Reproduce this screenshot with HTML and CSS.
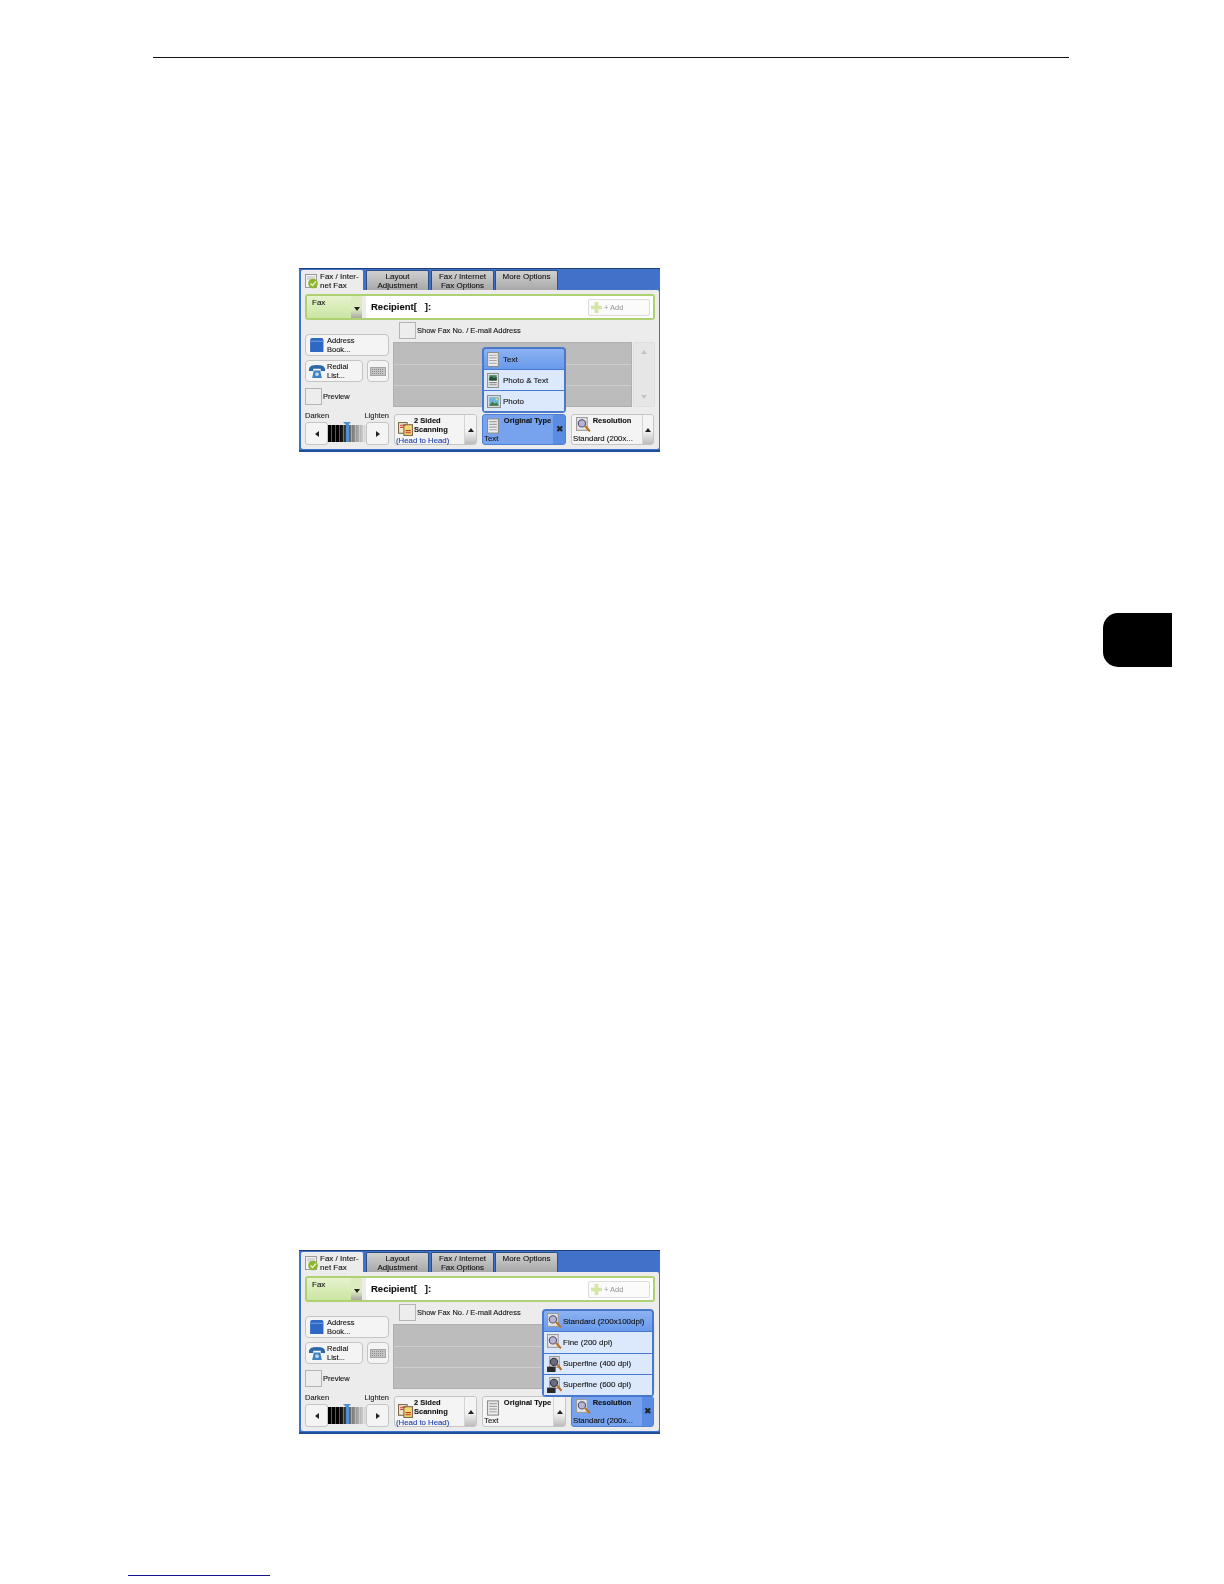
FILE: index.html
```html
<!DOCTYPE html>
<html lang="en">
<head>
  <meta charset="UTF-8">
  <meta name="viewport" content="width=device-width, initial-scale=1.0">
  <title>Fax Original Type and Resolution</title>
  <link rel="stylesheet" href="styles.css">
</head>
<body>
  <svg class="defs" width="0" height="0" aria-hidden="true">
    <symbol id="i-tab" viewBox="0 0 14 15">
      <rect x="0.5" y="0.5" width="11" height="13" fill="#f2f2f2" stroke="#9a9a9a"/>
      <path d="M2 3h8M2 5h8" stroke="#bbb"/>
      <circle cx="8" cy="9.5" r="4.8" fill="#8db52e"/>
      <path d="M5.5 9.5l2 2 3.5-4" fill="none" stroke="#e9f3c8" stroke-width="1.2"/>
    </symbol>
    <symbol id="i-doc" viewBox="0 0 11 14">
      <rect x="0.5" y="0.5" width="10" height="13" fill="#ececec" stroke="#8c8c8c"/>
      <path d="M2 3h7M2 5.5h7M2 8h7M2 10.5h7" stroke="#a2a2a2"/>
    </symbol>
    <symbol id="i-phototext" viewBox="0 0 11 14">
      <rect x="0.5" y="0.5" width="10" height="13" fill="#ececec" stroke="#8c8c8c"/>
      <rect x="2" y="2" width="7" height="5" fill="#3f8a5a"/>
      <path d="M2 5l2-2 2 2 3-1v3H2z" fill="#254a38"/>
      <path d="M2 9h7M2 11h7" stroke="#8c8c8c"/>
    </symbol>
    <symbol id="i-photo" viewBox="0 0 13 12">
      <rect x="0.5" y="0.5" width="12" height="11" fill="#e4e4e4" stroke="#8c8c8c"/>
      <rect x="2" y="2" width="9" height="8" fill="#6fb6d8"/>
      <path d="M2 10l3-4 2 2 2-1 2 3z" fill="#3c7d3c"/>
      <circle cx="9" cy="4" r="1" fill="#f0e060"/>
    </symbol>
    <symbol id="i-mag" viewBox="0 0 14 15">
      <rect x="0.5" y="0.5" width="10" height="12" fill="#e6e6e6" stroke="#9a9a9a"/>
      <circle cx="5.5" cy="6" r="3.4" fill="#b9b4d6" stroke="#4c4c6a"/>
      <path d="M8.5 8.5l4.5 5" stroke="#b8742a" stroke-width="2"/>
    </symbol>
    <symbol id="i-magdark" viewBox="0 0 14 15">
      <rect x="2.5" y="0.5" width="9" height="10" fill="#e0e0e0" stroke="#9a9a9a"/>
      <circle cx="6.5" cy="5.5" r="3.4" fill="#6a6a80" stroke="#35354a"/>
      <path d="M9.5 8l4 5" stroke="#b8742a" stroke-width="2"/>
      <rect x="0" y="10" width="8" height="5" fill="#2a2a2a"/>
    </symbol>
    <symbol id="i-book" viewBox="0 0 14 15">
      <path d="M1 3q0-2 2-2h9q1.500 0 1.500 2v11H1z" fill="#2f68c4"/>
      <path d="M1 4h12.500" stroke="#6f9ae0"/>
    </symbol>
    <symbol id="i-phone" viewBox="0 0 16 14">
      <path d="M0.500 5q0-4 7.500-4t7.500 4v1.500h-4V4.500h-7v2h-4z" fill="#2c68a8"/>
      <path d="M3.500 13l1.500-7h6l1.500 7z" fill="#3a82c4"/>
      <circle cx="8" cy="9.500" r="1.800" fill="#b8d4ec"/>
    </symbol>
    <symbol id="i-keys" viewBox="0 0 16 9">
      <rect x="0.500" y="0.500" width="15" height="8" fill="#c4c4c4" stroke="#a4a4a4"/>
      <path d="M2 2.500h12M2 4.500h12M2 6.500h12" stroke="#8a8a8a" stroke-dasharray="1 1"/>
    </symbol>
    <symbol id="i-sided" viewBox="0 0 14 13">
      <rect x="0.500" y="0.500" width="8" height="10" fill="#f0e8d0" stroke="#7a6a4a"/>
      <rect x="5.500" y="2.500" width="8" height="10" fill="#f4d870" stroke="#7a6a4a"/>
      <path d="M2 3h5M2 5h3" stroke="#c03a2a"/>
      <path d="M7 8h5M7 10h5" stroke="#c03a2a"/>
    </symbol>
    <symbol id="i-add" viewBox="0 0 12 12">
      <path d="M4 0h4v4h4v4H8v4H4V8H0V4h4z" fill="#d4e6a4"/>
    </symbol>
  </svg>

  <div class="rule"></div>

  <section class="panel first-panel">
    <div class="tabs">
      <div class="tab tab-on"><svg class="tab-icon"><use href="#i-tab"/></svg><span>Fax / Inter-<br>net Fax</span></div>
      <div class="tab">Layout<br>Adjustment</div>
      <div class="tab">Fax / Internet<br>Fax Options</div>
      <div class="tab tab-one">More Options</div>
    </div>
    <div class="sheet">
      <div class="address-bar">
        <div class="fax-select"><span>Fax</span><i class="fax-arrow"><b class="tri-down"></b></i></div>
        <div class="recipient">
          <strong>Recipient[&nbsp;&nbsp;&nbsp;]:</strong>
          <div class="add-btn"><svg class="add-icon"><use href="#i-add"/></svg>+ Add</div>
        </div>
      </div>
      <div class="middle">
        <div class="left-col">
          <div class="btn btn-address"><svg class="ic-book"><use href="#i-book"/></svg><span>Address<br>Book...</span></div>
          <div class="redial-row">
            <div class="btn btn-redial"><svg class="ic-phone"><use href="#i-phone"/></svg><span>Redial<br>List...</span></div>
            <div class="btn btn-keys"><svg class="ic-keys"><use href="#i-keys"/></svg></div>
          </div>
          <div class="check-row preview"><i class="check"></i>Preview</div>
        </div>
        <div class="right-col">
          <div class="check-row show-row"><i class="check"></i>Show Fax No. / E-mail Address</div>
          <div class="list-wrap">
            <div class="list"><div></div><div></div><div></div></div>
            <div class="scroll"><b class="tri-up faint"></b><b class="tri-down faint"></b></div>
          </div>
        </div>
      </div>
      <div class="bottom">
        <div class="density">
          <div class="density-labels"><span>Darken</span><span>Lighten</span></div>
          <div class="density-ctl">
            <div class="step"><b class="tri-left"></b></div>
            <div class="track"><i class="marker"></i></div>
            <div class="step"><b class="tri-right"></b></div>
          </div>
        </div>
        <div class="fn">
          <div class="fn-main">
            <svg class="fn-icon ic-sided"><use href="#i-sided"/></svg>
            <span class="fn-title left">2 Sided<br>Scanning</span>
            <span class="fn-val blue">(Head to Head)</span>
          </div>
          <div class="fn-side"><b class="tri-up"></b></div>
        </div>
        <div class="fn fn-wide fn-on">
          <div class="fn-main">
            <svg class="fn-icon"><use href="#i-doc"/></svg>
            <span class="fn-title">Original Type</span>
            <span class="fn-val">Text</span>
          </div>
          <div class="fn-side"><span class="close">&#10006;</span></div>
        </div>
        <div class="fn fn-last">
          <div class="fn-main">
            <svg class="fn-icon ic-mag"><use href="#i-mag"/></svg>
            <span class="fn-title">Resolution</span>
            <span class="fn-val">Standard (200x...</span>
          </div>
          <div class="fn-side"><b class="tri-up"></b></div>
        </div>
      </div>
    </div>
    <div class="popup popup-type">
      <div class="pop-row pop-on"><svg class="pop-doc"><use href="#i-doc"/></svg>Text</div>
      <div class="pop-row"><svg class="pop-doc"><use href="#i-phototext"/></svg>Photo &amp; Text</div>
      <div class="pop-row"><svg class="pop-photo"><use href="#i-photo"/></svg>Photo</div>
    </div>
  </section>

  <div class="chapter-tab"></div>

  <section class="panel second-panel">
    <div class="tabs">
      <div class="tab tab-on"><svg class="tab-icon"><use href="#i-tab"/></svg><span>Fax / Inter-<br>net Fax</span></div>
      <div class="tab">Layout<br>Adjustment</div>
      <div class="tab">Fax / Internet<br>Fax Options</div>
      <div class="tab tab-one">More Options</div>
    </div>
    <div class="sheet">
      <div class="address-bar">
        <div class="fax-select"><span>Fax</span><i class="fax-arrow"><b class="tri-down"></b></i></div>
        <div class="recipient">
          <strong>Recipient[&nbsp;&nbsp;&nbsp;]:</strong>
          <div class="add-btn"><svg class="add-icon"><use href="#i-add"/></svg>+ Add</div>
        </div>
      </div>
      <div class="middle">
        <div class="left-col">
          <div class="btn btn-address"><svg class="ic-book"><use href="#i-book"/></svg><span>Address<br>Book...</span></div>
          <div class="redial-row">
            <div class="btn btn-redial"><svg class="ic-phone"><use href="#i-phone"/></svg><span>Redial<br>List...</span></div>
            <div class="btn btn-keys"><svg class="ic-keys"><use href="#i-keys"/></svg></div>
          </div>
          <div class="check-row preview"><i class="check"></i>Preview</div>
        </div>
        <div class="right-col">
          <div class="check-row show-row"><i class="check"></i>Show Fax No. / E-mail Address</div>
          <div class="list-wrap">
            <div class="list"><div></div><div></div><div></div></div>
            <div class="scroll"></div>
          </div>
        </div>
      </div>
      <div class="bottom">
        <div class="density">
          <div class="density-labels"><span>Darken</span><span>Lighten</span></div>
          <div class="density-ctl">
            <div class="step"><b class="tri-left"></b></div>
            <div class="track"><i class="marker"></i></div>
            <div class="step"><b class="tri-right"></b></div>
          </div>
        </div>
        <div class="fn">
          <div class="fn-main">
            <svg class="fn-icon ic-sided"><use href="#i-sided"/></svg>
            <span class="fn-title left">2 Sided<br>Scanning</span>
            <span class="fn-val blue">(Head to Head)</span>
          </div>
          <div class="fn-side"><b class="tri-up"></b></div>
        </div>
        <div class="fn fn-wide">
          <div class="fn-main">
            <svg class="fn-icon"><use href="#i-doc"/></svg>
            <span class="fn-title">Original Type</span>
            <span class="fn-val">Text</span>
          </div>
          <div class="fn-side"><b class="tri-up"></b></div>
        </div>
        <div class="fn fn-last fn-on">
          <div class="fn-main">
            <svg class="fn-icon ic-mag"><use href="#i-mag"/></svg>
            <span class="fn-title">Resolution</span>
            <span class="fn-val">Standard (200x...</span>
          </div>
          <div class="fn-side"><span class="close">&#10006;</span></div>
        </div>
      </div>
    </div>
    <div class="popup popup-res">
      <div class="pop-row pop-on"><svg class="pop-mag"><use href="#i-mag"/></svg>Standard (200x100dpi)</div>
      <div class="pop-row"><svg class="pop-mag"><use href="#i-mag"/></svg>Fine (200 dpi)</div>
      <div class="pop-row"><svg class="pop-mag"><use href="#i-magdark"/></svg>Superfine (400 dpi)</div>
      <div class="pop-row"><svg class="pop-mag"><use href="#i-magdark"/></svg>Superfine (600 dpi)</div>
    </div>
  </section>

  <div class="foot-rule"></div>
</body>
</html>
```

FILE: styles.css
```css
html {
  background: #fff;
}
body {
  margin: 0;
  font-family: "Liberation Sans", Arial, sans-serif;
  font-size: 7.5px;
  line-height: 9px;
  color: #111;
  -webkit-text-stroke: 0.1px;
}
.defs {
  display: block;
  height: 0;
}
.rule {
  margin: 57px 0 0 153px;
  width: 916px;
  height: 1px;
  background: #111;
}
.chapter-tab {
  margin: 161px 0 0 1103px;
  width: 69px;
  height: 54px;
  background: #000;
  border-radius: 15px 0 0 15px;
}
.foot-rule {
  margin: 141px 0 0 128px;
  width: 142px;
  height: 1px;
  background: #14148c;
}

/* panel */
.panel {
  position: relative;
  box-sizing: border-box;
  width: 361px;
  height: 184px;
  margin-left: 299px;
  padding: 1px 1px 0 2px;
  background: #3f72c8;
  border-top: 1px solid #1d3f78;
  border-bottom: 2px solid #1f4f96;
  filter: blur(0.3px);
}
.first-panel {
  margin-top: 210px;
}
.second-panel {
  margin-top: 583px;
}

/* tabs */
.tabs {
  display: flex;
  height: 20px;
}
.tab {
  box-sizing: border-box;
  width: 63px;
  margin-right: 2px;
  padding-top: 1px;
  font-size: 8px;
  text-align: center;
  background: linear-gradient(#d0d0d0, #a8a8a8);
  border: 1px solid #2d4f86;
  border-bottom: 0;
  border-radius: 2px 2px 0 0;
}
.tab:nth-child(3) {
  margin-right: 1px;
}
.tab-one {
  line-height: 10px;
}
.tab-on {
  display: flex;
  width: 62px;
  margin-right: 3px;
  padding-left: 3px;
  text-align: left;
  background: #ececec;
  border-color: #ececec;
}
.tab-icon {
  width: 14px;
  height: 15px;
  margin: 2px 1px 0 0;
  flex: none;
}

/* sheet */
.sheet {
  box-sizing: border-box;
  height: 159px;
  padding: 4px 4px 5px 4px;
  background: #ececec;
  border-radius: 0 2px 2px 2px;
}
.address-bar {
  box-sizing: border-box;
  display: flex;
  height: 26px;
  padding: 1px;
  gap: 4px;
  background: #ececec;
  border: 2px solid #aed272;
  border-radius: 3px;
}
.fax-select {
  display: flex;
  justify-content: space-between;
  width: 55px;
  margin: -1px 0 -1px -1px;
  background: linear-gradient(#e6f3cf, #cbe5a2);
  font-size: 8px;
}
.fax-select span {
  padding: 2px 0 0 5px;
}
.fax-arrow {
  display: flex;
  align-items: center;
  justify-content: center;
  width: 11px;
  padding-top: 3px;
  background: linear-gradient(#dcecc0 60%, #a8a8a0);
}
.recipient {
  flex: 1;
  display: flex;
  align-items: center;
  justify-content: space-between;
  padding: 0 3px 0 5px;
  background: #fff;
  margin: -1px -1px -1px 0;
}
.recipient strong {
  margin-top: -2px;
  font-size: 9.5px;
  color: #111;
}
.add-btn {
  box-sizing: border-box;
  display: flex;
  align-items: center;
  gap: 2px;
  width: 62px;
  height: 17px;
  padding-left: 2px;
  color: #a0a0a0;
  background: #fbfbfb;
  border: 1px solid #dcdcdc;
  border-radius: 2px;
}
.add-icon {
  width: 11px;
  height: 11px;
}

/* middle */
.middle {
  display: flex;
  gap: 4px;
  height: 84px;
  margin-top: 2px;
}
.left-col {
  box-sizing: border-box;
  width: 84px;
  padding-top: 12px;
}
.btn {
  box-sizing: border-box;
  display: flex;
  align-items: center;
  background: #f4f4f4;
  border: 1px solid #c4c4c4;
  border-radius: 4px;
}
.btn-address {
  height: 22px;
  padding-left: 3px;
  gap: 3px;
}
.ic-book {
  width: 15px;
  height: 16px;
}
.redial-row {
  display: flex;
  gap: 4px;
  margin-top: 4px;
}
.btn-redial {
  width: 58px;
  height: 22px;
  padding-left: 2px;
  gap: 1px;
}
.ic-phone {
  width: 18px;
  height: 15px;
}
.btn-keys {
  width: 22px;
  height: 22px;
  justify-content: center;
}
.ic-keys {
  width: 16px;
  height: 9px;
}
.check-row {
  display: flex;
  align-items: center;
  gap: 1px;
  height: 17px;
}
.check {
  box-sizing: border-box;
  width: 17px;
  height: 17px;
  background: #ededed;
  border: 1px solid #b4b4b4;
}
.preview {
  margin-top: 6px;
}
.right-col {
  width: 262px;
}
.show-row {
  padding-left: 6px;
}
.list-wrap {
  display: flex;
  gap: 1px;
  height: 65px;
  margin-top: 3px;
}
.list {
  flex: 1;
  display: grid;
  grid-template-rows: 1fr 1fr 1fr;
  background: #bcbcbc;
  border: 1px solid #afafaf;
}
.list div + div {
  border-top: 1px solid #cdcdcd;
}
.scroll {
  box-sizing: border-box;
  display: flex;
  flex-direction: column;
  align-items: center;
  justify-content: space-between;
  width: 22px;
  padding: 7px 0;
  background: #e6e6e6;
  border: 1px solid #dedede;
  border-radius: 2px;
}

/* bottom row */
.bottom {
  display: flex;
  gap: 5px;
  margin-top: 6px;
}
.density {
  width: 84px;
}
.density-labels {
  display: flex;
  justify-content: space-between;
  height: 11px;
  margin-top: -1px;
  color: #222;
}
.density-ctl {
  display: flex;
  height: 23px;
}
.step {
  box-sizing: border-box;
  display: flex;
  align-items: center;
  justify-content: center;
  width: 23px;
  background: #f4f4f4;
  border: 1px solid #c4c4c4;
  border-radius: 3px;
}
.track {
  position: relative;
  flex: 1;
  margin: 3px 0;
  background:
    repeating-linear-gradient(90deg, transparent 0 3px, rgba(255, 255, 255, 0.35) 3px 4px),
    linear-gradient(90deg, #000 30%, #777 62%, #e2e2e2);
}
.marker {
  position: absolute;
  left: 18px;
  top: -3px;
  width: 3px;
  height: 20px;
  background: #4f8fd0;
}
.marker::before {
  content: "";
  position: absolute;
  left: -3px;
  top: 0;
  border: 4.5px solid transparent;
  border-top: 4px solid #4f8fd0;
  border-bottom: 0;
}
.fn {
  box-sizing: border-box;
  display: flex;
  width: 83px;
  height: 31px;
  margin-top: 2px;
  background: #f4f4f4;
  border: 1px solid #c4c4c4;
  border-radius: 3px;
}
.fn-wide {
  width: 84px;
}
.fn-main {
  flex: 1;
  display: grid;
  grid-template-columns: 18px 1fr;
  grid-template-rows: 1fr auto;
  padding: 1px 0 1px 1px;
  font-weight: bold;
}
.fn-icon {
  width: 12px;
  height: 16px;
  margin: 2px 0 0 3px;
}
.ic-sided {
  width: 15px;
  height: 14px;
  margin: 6px 0 0 2px;
}
.ic-mag {
  width: 15px;
  height: 16px;
  margin-top: 1px;
}
.fn-title {
  text-align: center;
  white-space: nowrap;
}
.fn-title.left {
  text-align: left;
}
.fn-last .fn-title {
  padding-right: 9px;
}
.fn-val {
  grid-column: 1 / -1;
  font-size: 7.8px;
  font-weight: normal;
  white-space: nowrap;
}
.blue {
  color: #1c3fa8;
}
.fn-side {
  display: flex;
  align-items: center;
  justify-content: center;
  width: 11px;
  background: linear-gradient(#f4f4f4 55%, #bcbcbc);
  border-left: 1px solid #d4d4d4;
  border-radius: 0 2px 2px 0;
}
.fn-last .fn-side {
  width: 10px;
}
.fn-on {
  background: #77a3ee;
  border-color: #4f80d4;
}
.fn-on .fn-side {
  background: #5a8ce4;
  border-left-color: #5a8ce4;
}
.close {
  font-size: 8.5px;
  color: #222;
}

/* arrows */
.tri-up, .tri-down, .tri-left, .tri-right {
  display: block;
  width: 0;
  height: 0;
  border: 3px solid transparent;
}
.tri-up {
  border-top: 0;
  border-bottom: 4px solid #222;
}
.tri-down {
  border-bottom: 0;
  border-top: 4px solid #222;
}
.tri-left {
  border-left: 0;
  border-right: 4px solid #222;
}
.tri-right {
  border-right: 0;
  border-left: 4px solid #222;
}
.faint {
  border-top-color: transparent;
  border-bottom-color: transparent;
}
.tri-up.faint {
  border-bottom-color: #c4c4c4;
}
.tri-down.faint {
  border-top-color: #c4c4c4;
}

/* popups over the list */
.popup {
  position: absolute;
  box-sizing: border-box;
  display: flex;
  flex-direction: column;
  gap: 1px;
  padding: 2px;
  font-size: 8px;
  background: #4a79cc;
  border-radius: 4px;
}
.popup-type {
  left: 183px;
  top: 78px;
  width: 84px;
  height: 66px;
}
.popup-res {
  left: 243px;
  top: 58px;
  width: 112px;
  height: 88px;
}
.pop-row {
  flex: 1;
  display: flex;
  align-items: center;
  gap: 4px;
  padding-left: 3px;
  background: #dce8fc;
  white-space: nowrap;
}
.pop-on {
  background: linear-gradient(#8cb2f2, #689aec);
  border-radius: 2px 2px 0 0;
}
.popup-res .pop-row {
  gap: 1px;
}
.pop-doc {
  width: 12px;
  height: 15px;
}
.pop-photo {
  width: 14px;
  height: 13px;
  margin-right: -2px;
}
.pop-mag {
  width: 15px;
  height: 16px;
}
```
